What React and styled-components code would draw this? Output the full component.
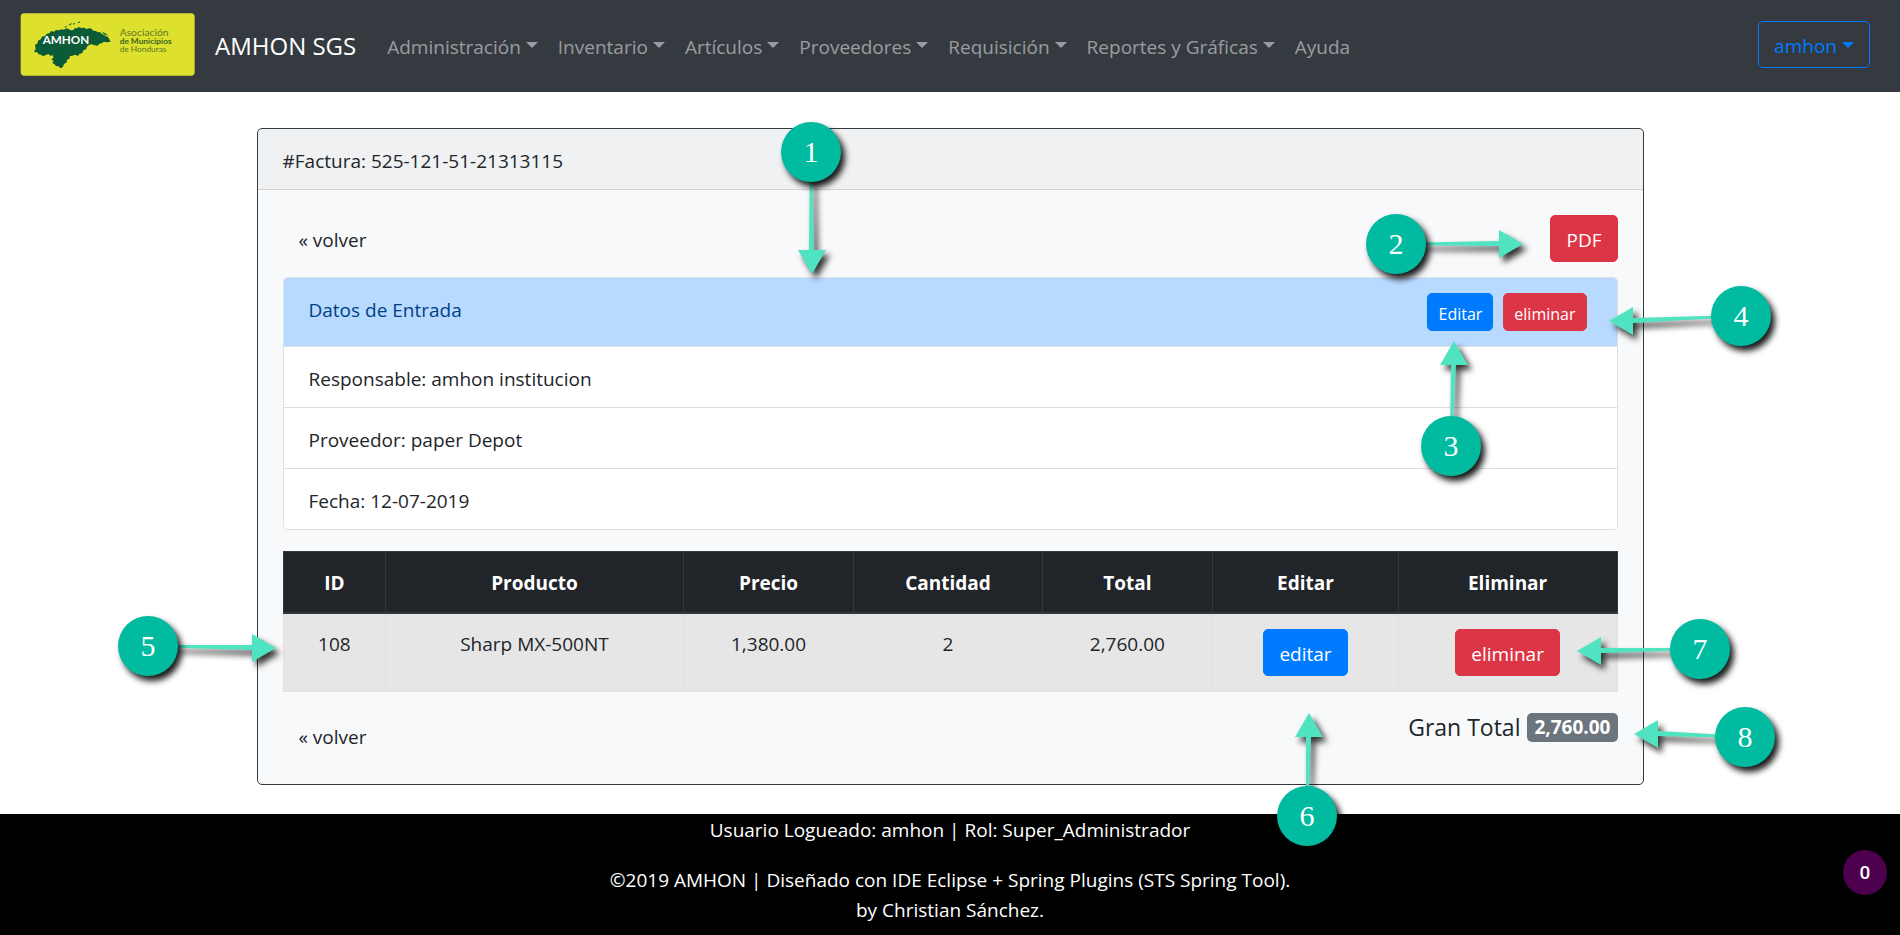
import React from "react";
import styled, { createGlobalStyle, css } from "styled-components";

const GlobalStyle = createGlobalStyle`
  *, *::before, *::after { box-sizing: border-box; }
  body {
    margin: 0;
    background: #fff;
    color: #212529;
    font-family: "Open Sans", "Noto Sans", sans-serif;
    font-size: 19px;
    line-height: 30px;
  }
  button { font: inherit; cursor: pointer; }
  a { color: inherit; text-decoration: none; }
`;

const Page = styled.div`
  position: relative;
  display: flex;
  flex-direction: column;
  min-height: 100vh;
  overflow-x: hidden;
`;

/* ---------- Navigation ---------- */

const Navbar = styled.header`
  display: flex;
  align-items: center;
  min-height: 92px;
  padding: 10px 30px 13px 20px;
  background: #343a40;
`;

const Brand = styled.a`
  display: flex;
  align-items: center;
  gap: 20px;
  margin-right: 21px;
  color: #fff;
  font-size: 24px;
  white-space: nowrap;
`;

const BrandName = styled.span`
  padding-top: 3px;
`;

const LogoSvg = styled.svg`
  display: block;
  width: 175px;
  height: 63px;
`;

const NavList = styled.ul`
  display: flex;
  margin: 0;
  padding: 0;
  list-style: none;
`;

const navItem = css`
  display: flex;
  align-items: center;
  padding: 12px 10px 8px;
  border: 0;
  background: none;
  color: rgba(255, 255, 255, 0.5);
  white-space: nowrap;
`;

const NavButton = styled.button`
  ${navItem}
`;

const NavLink = styled.a`
  ${navItem}
`;

const Caret = styled.span`
  width: 0;
  height: 0;
  margin: 0 0 3px 5px;
  border: 6px solid transparent;
  border-top-color: currentColor;
  border-bottom: 0;
`;

/* ---------- Buttons ---------- */

const tones = {
  primary: { bg: "#007bff", fg: "#fff", line: "#007bff" },
  danger: { bg: "#dc3545", fg: "#fff", line: "#dc3545" },
  outline: { bg: "transparent", fg: "#007bff", line: "#007bff" },
};

const Button = styled.button`
  display: inline-flex;
  align-items: center;
  justify-content: center;
  height: ${(p) => (p.$small ? 38 : 47)}px;
  padding: 3px ${(p) => (p.$small ? 10 : 15)}px 0;
  border: 1px solid ${(p) => tones[p.$tone].line};
  border-radius: 5px;
  background: ${(p) => tones[p.$tone].bg};
  color: ${(p) => tones[p.$tone].fg};
  font-size: ${(p) => (p.$small ? 16 : 19)}px;
  vertical-align: top;
`;

const UserMenu = styled.div`
  margin-left: auto;
`;

const BackLink = styled.a`
  display: flex;
  align-items: center;
  height: 47px;
  padding: 2px 16px 0;
`;

/* ---------- Invoice card ---------- */

const Main = styled.main`
  flex: 1;
  padding: 36px 20px 29px;
`;

const Card = styled.section`
  max-width: 1387px;
  margin: 0 auto;
  border: 1px solid #343a40;
  border-radius: 5px;
  background: #f8f9fa;
`;

const CardHeader = styled.div`
  padding: 17px 25px 13px;
  border-bottom: 1px solid rgba(0, 0, 0, 0.125);
  background: rgba(0, 0, 0, 0.03);
`;

const CardBody = styled.div`
  padding: 25px;
`;

const SplitRow = styled.div`
  display: flex;
  align-items: flex-start;
  justify-content: space-between;
`;

const DataList = styled.ul`
  margin: 15px 0 21px;
  padding: 0;
  list-style: none;
  border: 1px solid rgba(0, 0, 0, 0.125);
  border-radius: 5px;
  background: #fff;
`;

const DataItem = styled.li`
  padding: 17px 25px 13px;
  & + & {
    border-top: 1px solid rgba(0, 0, 0, 0.125);
  }
`;

const DataHeading = styled(DataItem)`
  display: flex;
  justify-content: space-between;
  padding: 15px 25px;
  border-radius: 4px 4px 0 0;
  background: #b8daff;
  color: #004085;
`;

const HeadingText = styled.span`
  padding-top: 2px;
`;

const ButtonPair = styled.div`
  display: flex;
  gap: 10px;
  margin-right: 5px;
`;

const Table = styled.table`
  width: 100%;
  margin-bottom: 20px;
  border-collapse: collapse;
  table-layout: fixed;
  text-align: center;
`;

const Col = styled.col`
  width: ${(p) => p.$share}%;
`;

const HeadCell = styled.th`
  padding: 16px 15px 14px;
  border: 1px solid #32383e;
  border-bottom-width: 2px;
  background: #212529;
  color: #fff;
  font-weight: 700;
`;

const Cell = styled.td`
  padding: 15px;
  border: 1px solid #dee2e6;
  background: #e6e6e6;
  vertical-align: top;
`;

const GrandTotal = styled.div`
  display: flex;
  align-items: center;
  gap: 7px;
  font-size: 23px;
`;

const TotalBadge = styled.strong`
  padding: 0 7px;
  border-radius: 5px;
  background: #6c757d;
  color: #fff;
  font-size: 19px;
  line-height: 29px;
`;

/* ---------- Footer ---------- */

const Footer = styled.footer`
  min-height: 121px;
  padding-top: 1px;
  background: #000;
  color: #fff;
  text-align: center;
`;

const FooterText = styled.p`
  margin: 0 0 20px;
  &:last-child { margin-bottom: 0; }
`;

const Counter = styled.div`
  position: absolute;
  right: 13px;
  bottom: 40px;
  display: flex;
  align-items: center;
  justify-content: center;
  width: 44px;
  height: 45px;
  border-radius: 50%;
  background: #4d004d;
  color: #fff;
  font-family: Roboto, sans-serif;
  font-weight: 500;
`;

/* ---------- Numbered callouts ---------- */

const CalloutAnchor = styled.div`
  position: absolute;
  top: ${(p) => p.$y}px;
  left: calc(50% + ${(p) => p.$x}px);
  width: 0;
  height: 0;
  pointer-events: none;
`;

const CalloutArrow = styled.svg`
  position: absolute;
  top: 0;
  left: 0;
  width: 1px;
  height: 1px;
  overflow: visible;
  fill: #50e3c2;
  filter: drop-shadow(4px 5px 3px rgba(0, 0, 0, 0.8));
`;

const CalloutBadge = styled.div`
  position: absolute;
  top: -30px;
  left: -30px;
  display: flex;
  align-items: center;
  justify-content: center;
  width: 60px;
  height: 60px;
  border-radius: 50%;
  background: #00bba0;
  box-shadow: 4px 5px 6px rgba(0, 0, 0, 0.9);
  color: #fff;
  font-family: "Liberation Serif", serif;
  font-size: 30px;
`;

/* x is measured from the middle of the page; dx, dy lead from the badge centre to the arrow tip. */
const callouts = [
  { n: 1, x: -139, y: 152, dx: 1, dy: 122 },
  { n: 2, x: 446, y: 244, dx: 127, dy: 0 },
  { n: 3, x: 501, y: 446, dx: 3, dy: -105 },
  { n: 4, x: 791, y: 316, dx: -132, dy: 5 },
  { n: 5, x: -802, y: 646, dx: 128, dy: 2 },
  { n: 6, x: 357, y: 816, dx: 2, dy: -103 },
  { n: 7, x: 750, y: 649, dx: -123, dy: 2 },
  { n: 8, x: 795, y: 737, dx: -111, dy: -3 },
];

function arrowPoints(dx, dy) {
  const head = 24;
  const half = 14;
  if (Math.abs(dx) > Math.abs(dy)) {
    const bx = dx - Math.sign(dx) * head;
    return `0,-1 ${bx},${dy - 3} ${bx},${dy - half} ${dx},${dy} ${bx},${dy + half} ${bx},${dy + 2} 0,1`;
  }
  const by = dy - Math.sign(dy) * head;
  return `-1,0 ${dx - 3},${by} ${dx - half},${by} ${dx},${dy} ${dx + half},${by} ${dx + 2},${by} 1,0`;
}

function Callout({ n, x, y, dx, dy }) {
  return (
    <CalloutAnchor $x={x} $y={y}>
      <CalloutArrow aria-hidden="true">
        <polygon points={arrowPoints(dx, dy)} />
      </CalloutArrow>
      <CalloutBadge>{n}</CalloutBadge>
    </CalloutAnchor>
  );
}

function Logo() {
  return (
    <LogoSvg viewBox="60 38 525 189" role="img" aria-label="AMHON, Asociación de Municipios de Honduras">
      <rect x="62" y="39" width="522" height="187" rx="11" fill="#dde02c" />
      <path
        fill="#0b5a38"
        d="M105 134l8-5 1-8 9-5 3-7 9-2 6-7 8-2 4-6 9 2 6-5 9 1 7-3 8 1 7-4 7 2 6 4 8-1 5-6 7 1 3-4 10 3 8-1 6 4 9-2 8 2 3 5 9 1 5 4 8-1 5 5 8 2 5 6 5 1 8 15-12 2-8-2-7 5-7 1-5 6-9-1-8-3-8 1-7 6-3 8-8 3-3 8-9 3-4 6-9-4-7 3-8 1-2 8-8 4 1 7-9 5-4 10-7 3-6-7-7 1-4-6-7-4 4-6-7-5 6-4-1-8-8 1-6-5-8 3-7 4-7-5-7-1-5-7-8 1 1-6 3-3z"
      />
      <path d="M194 81l6-3M207 74l8-4M219 71l6-1M234 67l6-2M302 99l14 5M308 96l14 8" stroke="#0b5a38" strokeWidth="3" />
      <path d="M300 97l20 11" stroke="#dde02c" strokeWidth="2" />
      <g fontFamily="Lato, sans-serif">
        <text x="128" y="132" fontSize="35" fontWeight="700" fill="#fff">AMHON</text>
        <g fill="#61782a">
          <text x="359" y="106" fontSize="31">Asociación</text>
          <text x="359" y="131" fontSize="25" fontWeight="700" fill="#36631f">de Municipios</text>
          <text x="359" y="155" fontSize="25">de Honduras</text>
        </g>
      </g>
    </LogoSvg>
  );
}

const menus = ["Administración", "Inventario", "Artículos", "Proveedores", "Requisición", "Reportes y Gráficas"];

const columns = [
  ["ID", 7.7],
  ["Producto", 22.3],
  ["Precio", 12.8],
  ["Cantidad", 14.1],
  ["Total", 12.8],
  ["Editar", 13.9],
  ["Eliminar", 16.4],
];

const products = [{ id: 108, name: "Sharp MX-500NT", price: "1,380.00", amount: 2, total: "2,760.00" }];

export default function App() {
  return (
    <Page>
      <GlobalStyle />
      <Navbar>
        <Brand href="#inicio">
          <Logo />
          <BrandName>AMHON SGS</BrandName>
        </Brand>
        <nav>
          <NavList>
            {menus.map((label) => (
              <li key={label}>
                <NavButton type="button" aria-haspopup="menu">
                  {label}
                  <Caret />
                </NavButton>
              </li>
            ))}
            <li>
              <NavLink href="#ayuda">Ayuda</NavLink>
            </li>
          </NavList>
        </nav>
        <UserMenu>
          <Button type="button" $tone="outline" aria-haspopup="menu">
            amhon
            <Caret />
          </Button>
        </UserMenu>
      </Navbar>

      <Main>
        <Card>
          <CardHeader>#Factura: 525-121-51-21313115</CardHeader>
          <CardBody>
            <SplitRow>
              <BackLink href="#volver">« volver</BackLink>
              <Button type="button" $tone="danger">PDF</Button>
            </SplitRow>

            <DataList>
              <DataHeading>
                <HeadingText>Datos de Entrada</HeadingText>
                <ButtonPair>
                  <Button type="button" $tone="primary" $small>Editar</Button>
                  <Button type="button" $tone="danger" $small>eliminar</Button>
                </ButtonPair>
              </DataHeading>
              <DataItem>Responsable: amhon institucion</DataItem>
              <DataItem>Proveedor: paper Depot</DataItem>
              <DataItem>Fecha: 12-07-2019</DataItem>
            </DataList>

            <Table>
              <colgroup>
                {columns.map(([label, share]) => (
                  <Col key={label} $share={share} />
                ))}
              </colgroup>
              <thead>
                <tr>
                  {columns.map(([label]) => (
                    <HeadCell key={label} scope="col">{label}</HeadCell>
                  ))}
                </tr>
              </thead>
              <tbody>
                {products.map((p) => (
                  <tr key={p.id}>
                    <Cell>{p.id}</Cell>
                    <Cell>{p.name}</Cell>
                    <Cell>{p.price}</Cell>
                    <Cell>{p.amount}</Cell>
                    <Cell>{p.total}</Cell>
                    <Cell>
                      <Button type="button" $tone="primary">editar</Button>
                    </Cell>
                    <Cell>
                      <Button type="button" $tone="danger">eliminar</Button>
                    </Cell>
                  </tr>
                ))}
              </tbody>
            </Table>

            <SplitRow>
              <BackLink href="#volver">« volver</BackLink>
              <GrandTotal>
                Gran Total
                <TotalBadge>2,760.00</TotalBadge>
              </GrandTotal>
            </SplitRow>
          </CardBody>
        </Card>
      </Main>

      <Footer>
        <FooterText>Usuario Logueado: amhon | Rol: Super_Administrador</FooterText>
        <FooterText>
          ©2019 AMHON | Diseñado con IDE Eclipse + Spring Plugins (STS Spring Tool).
          <br />
          by Christian Sánchez.
        </FooterText>
      </Footer>

      {callouts.map((c) => (
        <Callout key={c.n} {...c} />
      ))}
      <Counter>0</Counter>
    </Page>
  );
}
